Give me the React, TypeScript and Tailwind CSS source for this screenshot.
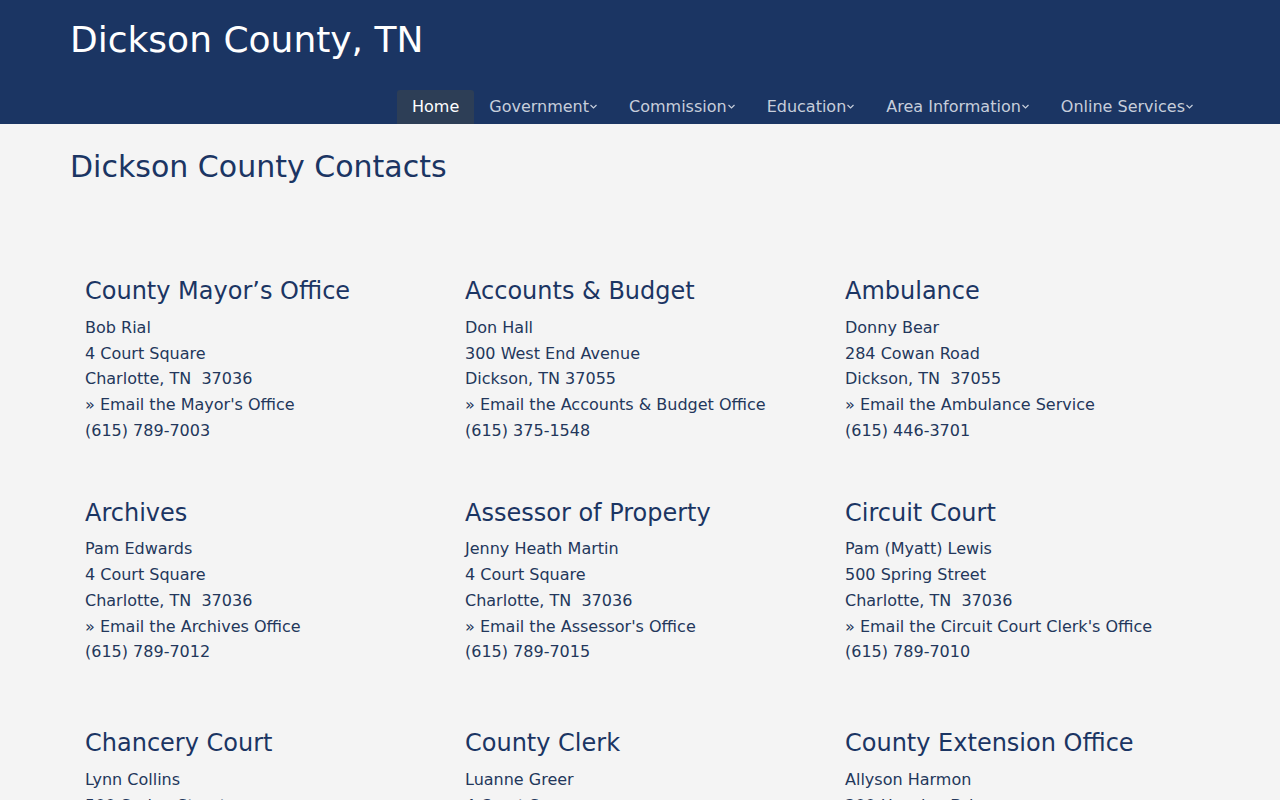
import React from "react";

type Contact = {
  title: string;
  lines: string[];
  email: string;
  phone: string;
};

const contacts: Contact[][] = [
  [
    { title: "County Mayor’s Office", lines: ["Bob Rial", "4 Court Square", "Charlotte, TN  37036"], email: "» Email the Mayor's Office", phone: "(615) 789-7003" },
    { title: "Accounts & Budget", lines: ["Don Hall", "300 West End Avenue", "Dickson, TN 37055"], email: "» Email the Accounts & Budget Office", phone: "(615) 375-1548" },
    { title: "Ambulance", lines: ["Donny Bear", "284 Cowan Road", "Dickson, TN  37055"], email: "» Email the Ambulance Service", phone: "(615) 446-3701" },
  ],
  [
    { title: "Archives", lines: ["Pam Edwards", "4 Court Square", "Charlotte, TN  37036"], email: "» Email the Archives Office", phone: "(615) 789-7012" },
    { title: "Assessor of Property", lines: ["Jenny Heath Martin", "4 Court Square", "Charlotte, TN  37036"], email: "» Email the Assessor's Office", phone: "(615) 789-7015" },
    { title: "Circuit Court", lines: ["Pam (Myatt) Lewis", "500 Spring Street", "Charlotte, TN  37036"], email: "» Email the Circuit Court Clerk's Office", phone: "(615) 789-7010" },
  ],
  [
    { title: "Chancery Court", lines: ["Lynn Collins", "500 Spring Street", "Charlotte, TN  37036"], email: "» Email the Clerk & Master's Office", phone: "(615) 789-4171" },
    { title: "County Clerk", lines: ["Luanne Greer", "4 Court Square", "Charlotte, TN  37036"], email: "» Email the County Clerk's Office", phone: "(615) 789-7013" },
    { title: "County Extension Office", lines: ["Allyson Harmon", "300 Henslee Drive", "Dickson, TN  37055"], email: "» Email the Extension Office", phone: "(615) 446-2788" },
  ],
];

const nav = ["Home", "Government", "Commission", "Education", "Area Information", "Online Services"];

function Chevron() {
  return (
    <svg width="10" height="6" viewBox="0 0 10 6" className="self-center" fill="none">
      <path d="M1.5 1 4.5 4 7.5 1" stroke="currentColor" strokeWidth="1.2" />
    </svg>
  );
}

function Card({ c }: { c: Contact }) {
  return (
    <div className="px-[15px]">
      <h3 className="mb-[9px] text-[24px] leading-[28.8px] text-[#1b3563]">{c.title}</h3>
      <div className="whitespace-pre-wrap text-[16px] leading-[25.75px] text-[#23375b]">
        {c.lines.map((l) => (
          <div key={l}>{l}</div>
        ))}
        <a href="#" className="block">{c.email}</a>
        <div>{c.phone}</div>
      </div>
    </div>
  );
}

export default function App() {
  return (
    <div className="min-h-[800px] bg-[#f4f4f4] font-['DejaVu_Sans',sans-serif]">
      <header className="bg-[#1b3563]">
        <div className="mx-auto w-[1140px]">
          <h1 className="pt-[19px] text-[36px] leading-[42px] text-white">Dickson County, TN</h1>
          <nav className="mt-[29px] flex justify-end">
            {nav.map((n, i) => (
              <a
                key={n}
                href="#"
                className={
                  i === 0
                    ? "flex h-[34px] items-center rounded-t-[3px] bg-[#2d3e56] px-[15px] text-[16px] text-white"
                    : "flex h-[34px] items-center px-[15px] text-[16px] text-[#c7cedb]"
                }
              >
                {n}
                {i > 0 && <Chevron />}
              </a>
            ))}
          </nav>
        </div>
      </header>
      <main className="mx-auto w-[1140px] pt-[25px]">
        <h2 className="text-[30px] leading-[36px] text-[#1b3563]">Dickson County Contacts</h2>
        <div className="mt-[92px] flex flex-col">
          {contacts.map((row, ri) => (
            <div key={ri} className={ri === 0 ? "grid grid-cols-3 pb-[55px]" : "grid grid-cols-3 pb-[64px]"}>
              {row.map((c) => (
                <Card key={c.title} c={c} />
              ))}
            </div>
          ))}
        </div>
      </main>
    </div>
  );
}
